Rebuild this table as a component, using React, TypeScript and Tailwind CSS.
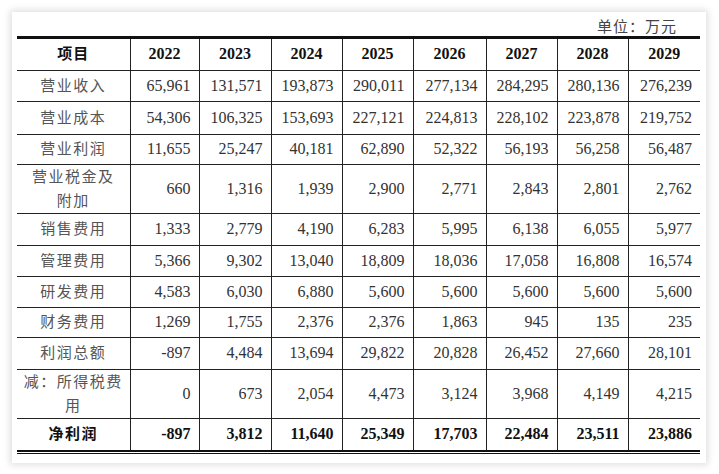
// Profit forecast table (单位：万元)

type Row = {
    name: React.ReactNode;
    values: string[];
    h: string;
    bold?: boolean;
};

const years = ["2022", "2023", "2024", "2025", "2026", "2027", "2028", "2029"];

const colWidths = [113, 69, 72, 71, 71, 73, 71, 71, 72];

const rows: Row[] = [
    { name: "营业收入", h: "h-[31px]", values: ["65,961", "131,571", "193,873", "290,011", "277,134", "284,295", "280,136", "276,239"] },
    { name: "营业成本", h: "h-[33px]", values: ["54,306", "106,325", "153,693", "227,121", "224,813", "228,102", "223,878", "219,752"] },
    { name: "营业利润", h: "h-[30px]", values: ["11,655", "25,247", "40,181", "62,890", "52,322", "56,193", "56,258", "56,487"] },
    {
        name: (
            <>
                营业税金及
                <br />
                附加
            </>
        ),
        h: "h-[49px]",
        values: ["660", "1,316", "1,939", "2,900", "2,771", "2,843", "2,801", "2,762"],
    },
    { name: "销售费用", h: "h-[32px]", values: ["1,333", "2,779", "4,190", "6,283", "5,995", "6,138", "6,055", "5,977"] },
    { name: "管理费用", h: "h-[31px]", values: ["5,366", "9,302", "13,040", "18,809", "18,036", "17,058", "16,808", "16,574"] },
    { name: "研发费用", h: "h-[31px]", values: ["4,583", "6,030", "6,880", "5,600", "5,600", "5,600", "5,600", "5,600"] },
    { name: "财务费用", h: "h-[30px]", values: ["1,269", "1,755", "2,376", "2,376", "1,863", "945", "135", "235"] },
    { name: "利润总额", h: "h-[32px]", values: ["-897", "4,484", "13,694", "29,822", "20,828", "26,452", "27,660", "28,101"] },
    {
        name: (
            <>
                减：所得税费
                <br />
                用
            </>
        ),
        h: "h-[49px]",
        values: ["0", "673", "2,054", "4,473", "3,124", "3,968", "4,149", "4,215"],
    },
    { name: "净利润", h: "h-[32px]", bold: true, values: ["-897", "3,812", "11,640", "25,349", "17,703", "22,484", "23,511", "23,886"] },
];

const font = "font-[family-name:'Liberation_Serif','Noto_Sans_CJK_SC',serif]";

const App: React.FC = () => {
    return (
        <div className={`min-h-[474px] w-[719px] bg-white pl-3 pt-3 ${font}`}>
            <div className="w-[694px] bg-white pb-[9px] pl-[5px] pr-[6px] pt-[6px] shadow-[0_0_7px_2px_rgba(0,0,0,0.13)]">
                {/* unit */}
                <div className="flex h-[18px] items-center justify-end pr-[23px] text-[15px] leading-none tracking-[1px] text-[#444]">
                    单位：万元
                </div>

                <div className="h-[3px] bg-[#111]" />

                <table className="w-[683px] table-fixed border-collapse">
                    <colgroup>
                        {colWidths.map((w, i) => (
                            <col key={i} style={{ width: w }} />
                        ))}
                    </colgroup>
                    <tbody>
                        <tr className="h-[31px]">
                            <th className="border-r border-[#222] text-center text-[15px] font-bold tracking-[1px] text-[#111]">
                                项目
                            </th>
                            {years.map((y, i) => (
                                <th
                                    key={y}
                                    className={`border-[#222] text-center text-[16px] font-bold text-[#111] ${i < years.length - 1 ? "border-r" : ""}`}
                                >
                                    {y}
                                </th>
                            ))}
                        </tr>
                        {rows.map((r, ri) => (
                            <tr key={ri} className={`${r.h} border-t border-[#222]`}>
                                <td
                                    className={`border-r border-[#222] text-center text-[15px] leading-[24px] tracking-[1.5px] ${r.bold ? "font-bold text-[#111]" : "text-[#555]"}`}
                                >
                                    {r.name}
                                </td>
                                {r.values.map((v, i) => (
                                    <td
                                        key={i}
                                        className={`border-[#222] pr-[8px] text-right text-[16px] ${r.bold ? "font-bold text-[#111]" : "text-[#333]"} ${i < r.values.length - 1 ? "border-r" : ""}`}
                                    >
                                        {v}
                                    </td>
                                ))}
                            </tr>
                        ))}
                    </tbody>
                </table>

                <div className="h-[2px] bg-[#111]" />
                <div className="h-[1px]" />
                <div className="h-[1px] bg-[#111]" />
            </div>
        </div>
    );
};

export default App;
